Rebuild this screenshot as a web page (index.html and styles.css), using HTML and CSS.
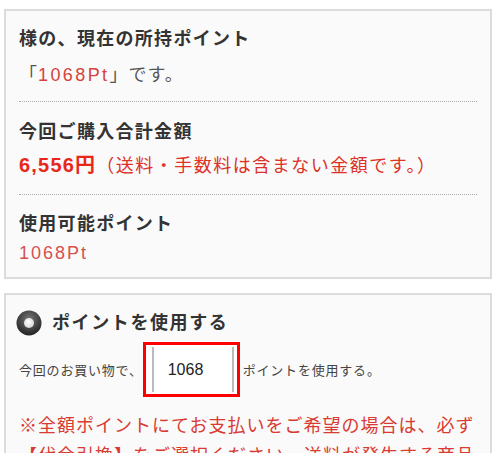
FILE: index.html
```html
<!DOCTYPE html>
<html lang="ja">
<head>
    <meta charset="UTF-8">
    <meta name="viewport" content="width=device-width, initial-scale=1.0">
    <title>ポイント利用</title>
    <link rel="stylesheet" href="styles.css">
</head>
<body>

    <div class="point_box">
        <div class="point_section first">
            <h3>様の、現在の所持ポイント</h3>
            <p class="point_value">「<span class="pt_red">1068Pt</span>」です。</p>
        </div>
        <div class="point_section">
            <h3>今回ご購入合計金額</h3>
            <p class="price"><strong>6,556円</strong>（送料・手数料は含まない金額です。）</p>
        </div>
        <div class="point_section last">
            <h3>使用可能ポイント</h3>
            <p class="usable">1068Pt</p>
        </div>
    </div>

    <div class="use_box">
        <label class="use_radio">
            <svg width="26" height="26" viewBox="0 0 26 26">
                <defs>
                    <radialGradient id="ring" cx="50%" cy="35%" r="65%">
                        <stop offset="0" stop-color="#777"/>
                        <stop offset="1" stop-color="#222"/>
                    </radialGradient>
                    <radialGradient id="dot" cx="45%" cy="40%" r="60%">
                        <stop offset="0" stop-color="#fff"/>
                        <stop offset="1" stop-color="#d8d8d8"/>
                    </radialGradient>
                </defs>
                <circle cx="13" cy="13" r="12.5" fill="url(#ring)"/>
                <circle cx="13" cy="13" r="5" fill="url(#dot)"/>
            </svg>
            <span>ポイントを使用する</span>
        </label>

        <div class="use_row">
            <span>今回のお買い物で、</span>
            <span class="point_input_wrap"><input type="text" class="point_input" value="1068"></span>
            <span>ポイントを使用する。</span>
        </div>

        <p class="notice">※全額ポイントにてお支払いをご希望の場合は、必ず【代金引換】をご選択ください。送料が発生する商品</p>
    </div>

</body>
</html>
```

FILE: styles.css
```css
body {
    font-family: 'Liberation Sans', 'Noto Sans CJK JP', sans-serif;
    background-color: #fff;
    color: #333;
    margin: 0;
    padding: 9px 8px 0 4px;
}

h3,
p {
    margin: 0;
}

.point_box,
.use_box {
    background-color: #fafafa;
    border: 2px solid #dcdcdc;
    padding: 0 13px;
}

.point_section {
    padding: 16px 0 10px;
    border-bottom: 1px dotted #aaa;
}

.point_section.first {
    padding-top: 14px;
    padding-bottom: 8px;
}

.point_section.last {
    border-bottom: none;
    padding-top: 15px;
    padding-bottom: 9px;
}

.point_section h3 {
    font-size: 18px;
    line-height: 28px;
    letter-spacing: 1.3px;
    font-weight: bold;
}

.point_value {
    margin-top: 4px;
    font-size: 18px;
    line-height: 36px;
    letter-spacing: 1px;
    color: #555;
}

.pt_red {
    color: #d6423c;
    letter-spacing: 2.4px;
}

.price {
    margin-top: 1px;
    font-size: 18px;
    line-height: 36px;
    letter-spacing: 1.5px;
    color: #dd3227;
}

.price strong {
    font-size: 20px;
    letter-spacing: 1.2px;
    color: #e8271b;
}

.usable {
    font-size: 18px;
    line-height: 30px;
    letter-spacing: 2px;
    color: #d65050;
}

/* use points */
.use_box {
    margin-top: 14px;
    padding: 14px 13px 20px;
}

.use_radio {
    display: flex;
    align-items: center;
    gap: 10px;
    margin-left: -3px;
    font-size: 18px;
    font-weight: bold;
    letter-spacing: 1.6px;
    line-height: 28px;
}

.use_radio svg {
    display: block;
}

.use_row {
    display: flex;
    align-items: center;
    margin-top: 5px;
    font-size: 13px;
    letter-spacing: 0.8px;
    color: #444;
}

.point_input_wrap {
    display: flex;
    background-color: #fff;
    border: 3px solid #f00;
    padding: 2px 3px 2px 6px;
    margin-right: 3px;
}

.point_input {
    width: 82px;
    height: 45px;
    box-sizing: border-box;
    border: none;
    border-left: 2px solid #bbb;
    border-right: 2px solid #bbb;
    padding: 0 0 0 14px;
    font-family: 'Liberation Sans', sans-serif;
    font-size: 16px;
    color: #222;
    background-color: #fff;
}

.notice {
    margin-top: 14px;
    font-size: 18px;
    line-height: 30px;
    letter-spacing: 1px;
    color: #d93a32;
}
```
